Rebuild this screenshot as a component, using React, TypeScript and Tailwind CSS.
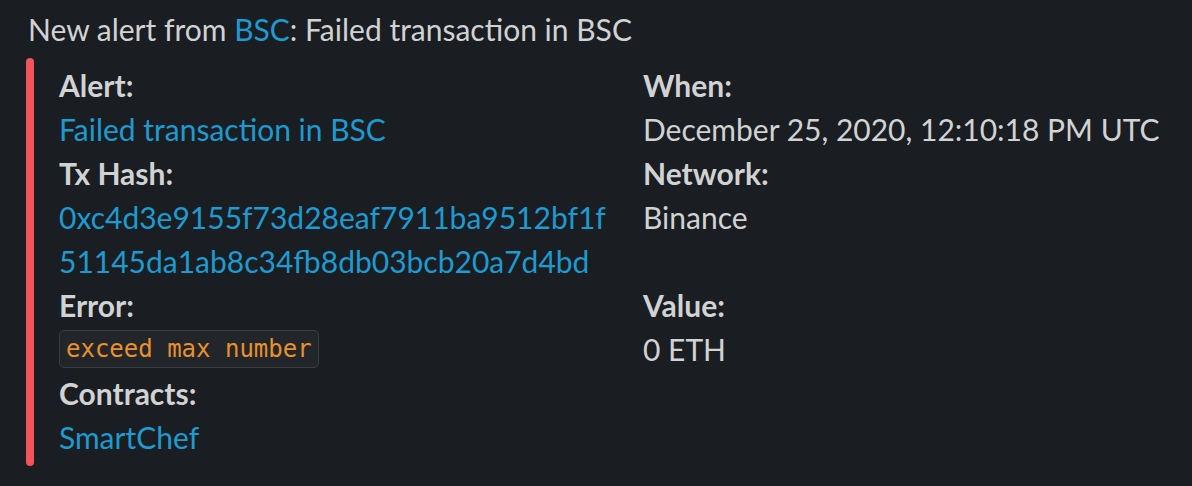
export default function App() {
  const label = "font-bold text-[#d1d2d3]";
  const link = "text-[#1d9bd1]";
  return (
    <div className="w-[1192px] h-[486px] bg-[#1a1d21] text-[#d1d2d3] overflow-hidden" style={{ fontFamily: "Lato, 'Noto Sans', sans-serif" }}>
      <div className="pl-[28px] pt-[11px] text-[30px] leading-[36px]">
        New alert from <span className={link}>BSC</span>: Failed transaction in BSC
      </div>
      <div className="flex mt-[11px] ml-[26px]">
        <div className="w-[8px] h-[408px] rounded-full bg-[#f4535a]" />
        <div className="grid grid-cols-[584px_1fr] pl-[25px] pt-[5px] text-[30px] leading-[44px]">
          <div className="flex flex-col">
            <div className={label}>Alert:</div>
            <div className={link}>Failed transaction in BSC</div>
            <div className={label}>Tx Hash:</div>
            <div className={link}>0xc4d3e9155f73d28eaf7911ba9512bf1f</div>
            <div className={link}>51145da1ab8c34fb8db03bcb20a7d4bd</div>
            <div className={label}>Error:</div>
            <div className="h-[44px] flex items-center">
              <span className="inline-block border border-[#3b3d40] bg-[#222529] rounded-[5px] px-[6px] h-[38px] leading-[36px] text-[24px] text-[#e8912d]" style={{ fontFamily: "'DejaVu Sans Mono', monospace" }}>
                exceed max number
              </span>
            </div>
            <div className={label}>Contracts:</div>
            <div className={link}>SmartChef</div>
          </div>
          <div className="flex flex-col">
            <div className={label}>When:</div>
            <div>December 25, 2020, 12:10:18 PM UTC</div>
            <div className={label}>Network:</div>
            <div>Binance</div>
            <div className="h-[44px]" />
            <div className={label}>Value:</div>
            <div>0 ETH</div>
          </div>
        </div>
      </div>
    </div>
  );
}
